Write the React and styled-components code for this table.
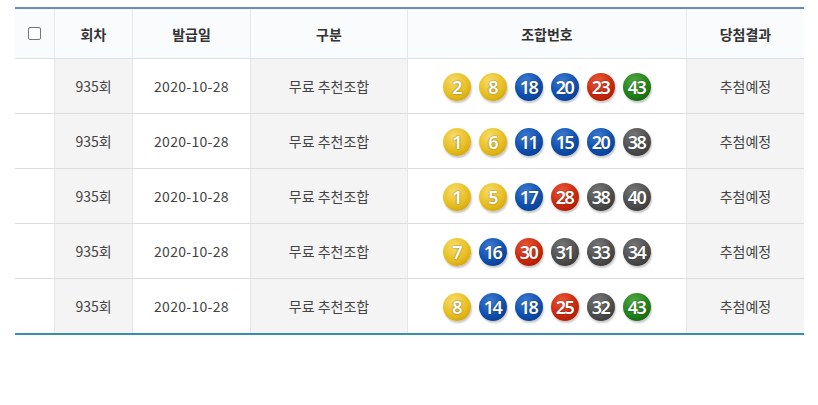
import React from "react";
import styled, { createGlobalStyle } from "styled-components";

const Global = createGlobalStyle`
  html, body { margin: 0; padding: 0; background: #fff; }
  body { font-family: "Noto Sans CJK KR", "Noto Sans", sans-serif; color: #333; }
`;

const Page = styled.div`
  padding: 7px 14px 0 15px;
`;

const Table = styled.div`
  width: 789px;
  display: grid;
  grid-template-columns: 39px 78px 118px 157px 279px 118px;
  border-top: 2px solid #6b8cae;
  border-bottom: 2px solid #3b8daf;
`;

const HeadCell = styled.div`
  height: 49px;
  display: flex;
  align-items: center;
  justify-content: center;
  background: #f9fbfd;
  border-bottom: 1px solid #dcdfe3;
  border-left: ${(p) => (p.$first ? "none" : "1px solid #e6e9ec")};
  font-size: 14px;
  font-weight: 700;
  color: #333;
  box-sizing: content-box;
`;

const Cell = styled.div`
  height: 54px;
  display: flex;
  align-items: center;
  justify-content: center;
  background: ${(p) => (p.$shade ? "#f4f4f4" : "#fff")};
  border-bottom: ${(p) => (p.$last ? "none" : "1px solid #dddddd")};
  border-left: ${(p) => (p.$first ? "none" : "1px solid #e6e6e6")};
  font-size: 14px;
  color: #444;
  box-sizing: content-box;
`;

const DateText = styled.span`
  letter-spacing: 0.3px;
`;

const Check = styled.span`
  width: 11px;
  height: 11px;
  border: 1px solid #767676;
  border-radius: 2px;
  background: #fff;
  display: inline-block;
`;

const Balls = styled.div`
  display: flex;
  gap: 8px;
  padding-top: 2px;
`;

const palette = {
  yellow: ["#f9dd6a", "#e6bd1f", "#c49505"],
  blue: ["#3f7dd2", "#0f4fae", "#06307a"],
  red: ["#ea5a3a", "#cc280d", "#8e1400"],
  gray: ["#7a7a7a", "#4e4e4e", "#2a2a2a"],
  green: ["#52aa42", "#22811a", "#10520b"],
};

const Ball = styled.span`
  width: 28px;
  height: 28px;
  border-radius: 50%;
  display: flex;
  align-items: center;
  justify-content: center;
  background: ${({ $c }) =>
    `radial-gradient(circle at 40% 30%, ${palette[$c][0]} 0%, ${palette[$c][1]} 55%, ${palette[$c][2]} 100%)`};
  box-shadow: 1px 2px 2px rgba(0, 0, 0, 0.22);
  color: #fff;
  font-family: "Noto Sans", "Liberation Sans", sans-serif;
  font-size: 18px;
  font-weight: 600;
  letter-spacing: -1.6px;
  text-indent: -1px;
  text-shadow: 0 0 2px rgba(0, 0, 0, 0.5);
  line-height: 1;
`;

const colorOf = (n) =>
  n <= 10 ? "yellow" : n <= 20 ? "blue" : n <= 30 ? "red" : n <= 40 ? "gray" : "green";

const rows = [
  [2, 8, 18, 20, 23, 43],
  [1, 6, 11, 15, 20, 38],
  [1, 5, 17, 28, 38, 40],
  [7, 16, 30, 31, 33, 34],
  [8, 14, 18, 25, 32, 43],
];

export default function App() {
  return (
    <Page>
      <Global />
      <Table>
        <HeadCell $first>
          <Check />
        </HeadCell>
        <HeadCell>회차</HeadCell>
        <HeadCell>발급일</HeadCell>
        <HeadCell>구분</HeadCell>
        <HeadCell>조합번호</HeadCell>
        <HeadCell>당첨결과</HeadCell>
        {rows.map((nums, i) => {
          const last = i === rows.length - 1;
          return (
            <React.Fragment key={i}>
              <Cell $first $last={last} />
              <Cell $shade $last={last}>935회</Cell>
              <Cell $last={last}>
                <DateText>2020-10-28</DateText>
              </Cell>
              <Cell $shade $last={last}>무료 추천조합</Cell>
              <Cell $last={last}>
                <Balls>
                  {nums.map((n, j) => (
                    <Ball key={j} $c={colorOf(n)}>
                      {n}
                    </Ball>
                  ))}
                </Balls>
              </Cell>
              <Cell $shade $last={last}>추첨예정</Cell>
            </React.Fragment>
          );
        })}
      </Table>
    </Page>
  );
}
